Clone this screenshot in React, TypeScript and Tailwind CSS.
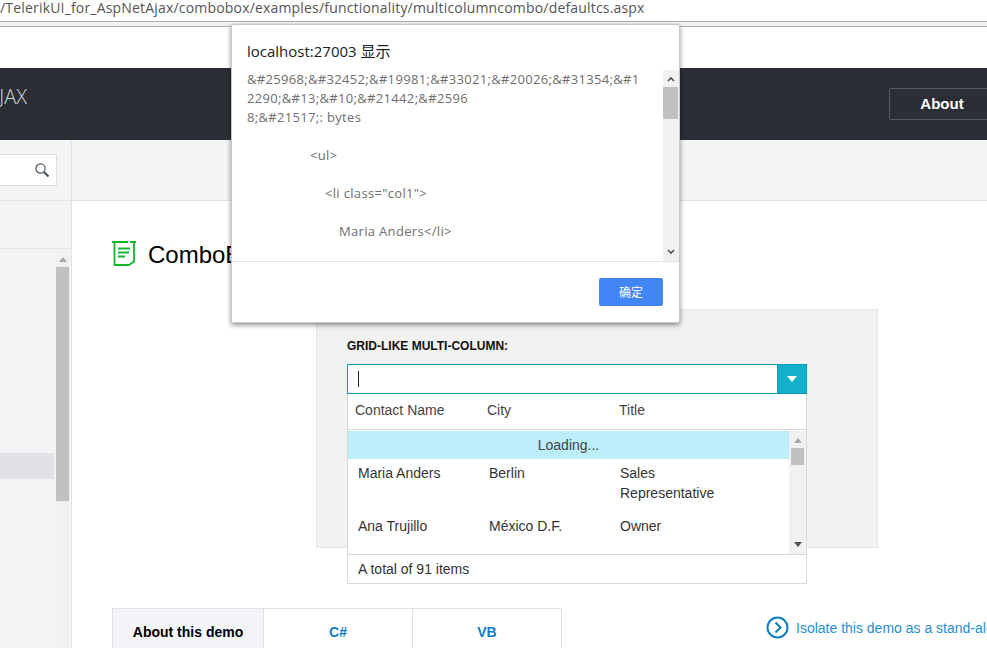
const ARIAL = "font-['Liberation_Sans',Arial,sans-serif]";
const UI = "font-['Open_Sans','Noto_Sans_CJK_SC',sans-serif]";

function AlertDialog() {
  return (
    <div className={`absolute left-[231px] top-[24px] flex h-[299px] w-[449px] flex-col rounded-[2px] border border-[#c8c8c8] bg-white shadow-[0_2px_5px_rgba(0,0,0,0.45)] ${UI}`}>
      <div className="h-[45px] pl-[15px] pt-[13px] text-[15px] leading-[26px] text-[#202124]">localhost:27003 显示</div>
      <div className="flex h-[192px] border-b border-[#e4e4e4]">
        <div className="w-[431px] pl-[15px] text-[13px] leading-[19px] tracking-[0.025em] text-[#6e6e6e]">
          <div>&amp;#25968;&amp;#32452;&amp;#19981;&amp;#33021;&amp;#20026;&amp;#31354;&amp;#1</div>
          <div>2290;&amp;#13;&amp;#10;&amp;#21442;&amp;#2596</div>
          <div>8;&amp;#21517;: bytes</div>
          <div className="mt-[19px] pl-[63px]">&lt;ul&gt;</div>
          <div className="mt-[19px] pl-[78px]">&lt;li class="col1"&gt;</div>
          <div className="mt-[19px] pl-[92px]">Maria Anders&lt;/li&gt;</div>
        </div>
        <div className="relative w-[16px] bg-[#f1f1f1]">
          <svg className="absolute left-[4px] top-[6px]" width="8" height="6" viewBox="0 0 8 6">
            <path d="M1 5 L4 2 L7 5" fill="none" stroke="#505050" strokeWidth="1.6" />
          </svg>
          <div className="absolute left-0 right-px top-[17px] h-[32px] bg-[#c1c1c1]" />
          <svg className="absolute bottom-[6px] left-[4px]" width="8" height="6" viewBox="0 0 8 6">
            <path d="M1 1 L4 4 L7 1" fill="none" stroke="#505050" strokeWidth="1.6" />
          </svg>
        </div>
      </div>
      <div className="flex flex-1 justify-end pr-[16px] pt-[16px]">
        <button className="h-[28px] w-[64px] rounded-[2px] bg-[#4285f4] pt-[2px] text-[12px] text-white">确定</button>
      </div>
    </div>
  );
}

function ComboDropdown() {
  return (
    <div className="absolute left-[30px] top-[54px] w-[460px] text-[14px] leading-[20px] text-[#333]">
      <div className="flex h-[30px] border border-[#0e9ab3] bg-white">
        <div className="flex flex-1 items-center pl-[10px]">
          <div className="h-[16px] w-px bg-[#222]" />
        </div>
        <div className="flex w-[29px] items-center justify-center border-l border-[#0e9ab3] bg-[#13b0cc]">
          <svg width="10" height="6" viewBox="0 0 10 6">
            <path d="M0 0 H10 L5 6 Z" fill="#fff" />
          </svg>
        </div>
      </div>
      <div className="border border-t-0 border-[#d9d9d9] bg-white">
        <div className="flex h-[36px] border-b border-[#d9d9d9] pl-[7px] pt-[6px] text-[#444]">
          <span className="w-[132px]">Contact Name</span>
          <span className="w-[132px]">City</span>
          <span>Title</span>
        </div>
        <div className="flex h-[124px] pt-px">
          <div className="w-[441px]">
            <div className="h-[28px] bg-[#bbeef9] text-center leading-[28px] text-[#444]">Loading...</div>
            <div className="flex pl-[10px] pt-[4px]">
              <span className="w-[131px]">Maria Anders</span>
              <span className="w-[131px]">Berlin</span>
              <span className="w-[130px]">Sales Representative</span>
            </div>
            <div className="flex pl-[10px] pt-[13px]">
              <span className="w-[131px]">Ana Trujillo</span>
              <span className="w-[131px]">México D.F.</span>
              <span>Owner</span>
            </div>
          </div>
          <div className="relative w-[17px] bg-[#f1f1f1]">
            <svg className="absolute left-[5px] top-[7px]" width="8" height="5" viewBox="0 0 8 5">
              <path d="M0 5 L4 0 L8 5 Z" fill="#a8a8a8" />
            </svg>
            <div className="absolute left-[2px] right-[2px] top-[17px] h-[17px] bg-[#c1c1c1]" />
            <svg className="absolute bottom-[7px] left-[5px]" width="8" height="5" viewBox="0 0 8 5">
              <path d="M0 0 H8 L4 5 Z" fill="#505050" />
            </svg>
          </div>
        </div>
        <div className="h-[29px] border-t border-[#d9d9d9] pl-[10px] leading-[28px]">A total of 91 items</div>
      </div>
    </div>
  );
}

function Sidebar() {
  return (
    <aside className="flex w-[72px] shrink-0 flex-col border-r border-[#e2e4e8] bg-[#f3f4f6]">
      <div className="h-[61px] border-b border-[#e2e4e8] pt-[14px]">
        <div className="flex h-[32px] w-[57px] items-center justify-end border border-[#dcdee2] border-l-0 bg-white pr-[6px]">
          <svg width="16" height="16" viewBox="0 0 16 16" fill="none">
            <circle cx="6.5" cy="6.5" r="4.6" stroke="#4a5560" strokeWidth="1.2" />
            <path d="M10 10 L14.5 14.5" stroke="#3c4650" strokeWidth="2" />
          </svg>
        </div>
      </div>
      <div className="h-[48px] border-b border-[#e2e4e8]" />
      <div className="flex flex-1">
        <div className="w-[54px] pt-[204px]">
          <div className="h-[26px] bg-[#e1e2e6]" />
        </div>
        <div className="relative ml-[1px] w-[15px] bg-[#f1f1f1]">
          <svg className="absolute left-[4px] top-[8px]" width="8" height="5" viewBox="0 0 8 5">
            <path d="M0 5 L4 0 L8 5 Z" fill="#a8a8a8" />
          </svg>
          <div className="absolute left-px right-px top-[18px] h-[234px] bg-[#c1c1c1]" />
        </div>
      </div>
    </aside>
  );
}

export default function App() {
  return (
    <div className={`relative flex h-[648px] w-[987px] flex-col overflow-hidden bg-white ${ARIAL}`}>
      {/* browser address bar */}
      <div className={`h-[21px] overflow-hidden whitespace-nowrap text-[14px] leading-[16px] tracking-[0.013em] text-[#555] ${UI}`}>
        /TelerikUI_for_AspNetAjax/combobox/examples/functionality/multicolumncombo/defaultcs.aspx
      </div>
      <div className="h-[6px] border-y border-[#b0b0b0] bg-[#f2f2f2]" />

      <div className="h-[41px]" />

      <header className="flex h-[72px] shrink-0 items-center justify-between bg-[#2b2e35]">
        <div className={`ml-[-3px] w-[30px] overflow-hidden pb-[14px] text-right text-[20px] font-light text-[#d4d5d6] ${UI}`}>
          <span className="whitespace-nowrap">JAX</span>
        </div>
        <div className="mr-[-8px] flex h-[32px] w-[106px] items-center justify-center rounded-[2px] border border-[#55585e] text-[15px] font-bold text-white">
          About
        </div>
      </header>

      <div className="flex min-h-0 flex-1">
        <Sidebar />
        <main className="min-w-0 flex-1">
          <div className="h-[61px] border-b border-[#e2e4e8] bg-[#f3f4f6]" />
          <div className="flex pl-[40px] pt-[40px]">
            <svg width="24" height="26" viewBox="0 0 24 26" fill="none" stroke="#12b52b" strokeWidth="1.8">
              <path d="M0 1 H16 M18 1 H24" />
              <path d="M2.5 2 V24 H17 L22 20.5 V2" />
              <path d="M6 7.5 H18 M6 11.5 H17 M6 15.5 H13" />
            </svg>
            <h1 className="ml-[12px] text-[24px] leading-[28px] text-black">ComboBox</h1>
          </div>

          <div className="relative ml-[244px] mt-[40px] h-[239px] w-[562px] border border-[#e5e5e5] bg-[#f2f2f2] pl-[30px] pt-[29px]">
            <div className="text-[12px] font-bold leading-[14px] text-[#111]">GRID-LIKE MULTI-COLUMN:</div>
            <ComboDropdown />
          </div>

          <div className="ml-[40px] mt-[60px] flex items-start">
            <div className="flex h-[60px] w-[450px] shrink-0 border border-[#e0e2e6] text-center text-[14px] font-bold leading-[46px]">
              <div className="w-[151px] border-r border-[#e0e2e6] bg-[#f4f5f8] text-black">About this demo</div>
              <div className="w-[149px] border-r border-[#e0e2e6] text-[#0f7dc2]">C#</div>
              <div className="flex-1 text-[#0f7dc2]">VB</div>
            </div>
            <div className="ml-[204px] mt-[8px] flex shrink-0 items-center whitespace-nowrap text-[14px] leading-[22px] text-[#1f8fd0]">
              <svg width="23" height="23" viewBox="0 0 23 23" fill="none" stroke="#0f7dc2" strokeWidth="2">
                <circle cx="11.5" cy="11.5" r="10" />
                <path d="M9.5 6.5 L14.5 11.5 L9.5 16.5" />
              </svg>
              <span className="ml-[7px]">Isolate this demo as a stand-alone application</span>
            </div>
          </div>
        </main>
      </div>

      <AlertDialog />
    </div>
  );
}
